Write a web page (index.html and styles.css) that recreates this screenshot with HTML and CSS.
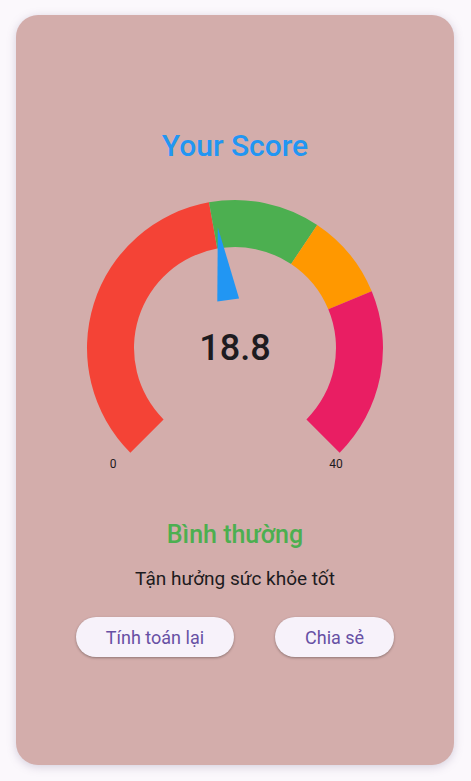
FILE: index.html
```html
<!DOCTYPE html>
<html>
<head>
<meta charset="utf-8">
<link rel="stylesheet" href="styles.css">
</head>
<body>
<div class="card">
  <h1 class="title">Your Score</h1>
  <svg class="gauge" width="300" height="300" viewBox="0 0 300 300">
    <path fill="#f44336" d="M45.35 272.65 A148 148 0 0 1 123.98 22.30 L132.25 68.57 A101 101 0 0 0 78.58 239.42 Z"/>
    <path fill="#4caf50" d="M123.98 22.30 A148 148 0 0 1 232.22 44.94 L206.11 84.02 A101 101 0 0 0 132.25 68.57 Z"/>
    <path fill="#ff9800" d="M232.22 44.94 A148 148 0 0 1 286.73 111.36 L243.31 129.35 A101 101 0 0 0 206.11 84.02 Z"/>
    <path fill="#e91e63" d="M286.73 111.36 A148 148 0 0 1 254.65 272.65 L221.42 239.42 A101 101 0 0 0 243.31 129.35 Z"/>
    <polygon fill="#2196f3" points="132.8,47.2 154.1,118.5 132.3,121.5"/>
    <text class="value" x="150" y="180" text-anchor="middle">18.8</text>
    <text class="tick" x="28" y="288" text-anchor="middle">0</text>
    <text class="tick" x="251" y="288" text-anchor="middle">40</text>
  </svg>
  <div class="status">Bình thường</div>
  <div class="message">Tận hưởng sức khỏe tốt</div>
  <div class="actions">
    <button class="btn">Tính toán lại</button>
    <button class="btn">Chia sẻ</button>
  </div>
</div>
</body>
</html>
```
FILE: styles.css
```css
html, body {
  margin: 0;
  padding: 0;
}
body {
  background: #fbf8fc;
  font-family: Roboto, "Noto Sans", sans-serif;
  padding: 15px 17px 16px 16px;
  height: 781px;
  box-sizing: border-box;
}
.card {
  height: 750px;
  box-sizing: border-box;
  background: #d3adab;
  border-radius: 22px;
  box-shadow: 0 2px 10px rgba(120, 100, 140, 0.28);
  display: flex;
  flex-direction: column;
  align-items: center;
  padding-top: 113px;
}
.title {
  margin: 0;
  font-size: 30px;
  line-height: 36px;
  font-weight: 500;
  color: #2196f3;
}
.gauge {
  display: block;
  margin-top: 16px;
}
.value {
  font-family: Roboto, sans-serif;
  font-size: 36px;
  font-weight: 500;
  fill: #1d1b20;
}
.tick {
  font-family: Roboto, sans-serif;
  font-size: 12px;
  fill: #1d1b20;
}
.status {
  margin-top: 39px;
  font-size: 25px;
  line-height: 32px;
  font-weight: 500;
  color: #4caf50;
}
.message {
  margin-top: 16px;
  font-size: 19px;
  line-height: 24px;
  color: #1d1b20;
}
.actions {
  display: flex;
  gap: 41px;
  margin-top: 26px;
}
.btn {
  height: 40px;
  padding: 0 30px;
  border: none;
  border-radius: 20px;
  background: #f7f2fa;
  color: #6750a4;
  font-family: Roboto, sans-serif;
  font-size: 18px;
  box-shadow: 0 1px 3px rgba(0, 0, 0, 0.22), 0 1px 2px rgba(0, 0, 0, 0.12);
}
```
